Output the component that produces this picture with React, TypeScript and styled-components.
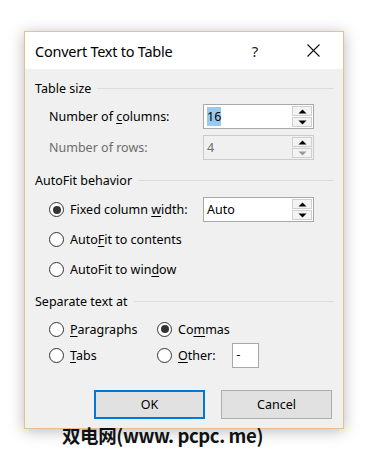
import React from "react";
import styled, { createGlobalStyle } from "styled-components";

const Global = createGlobalStyle`
  html, body { margin: 0; padding: 0; background: #ffffff; }
  body { font-family: "Noto Sans", "Open Sans", sans-serif; }
`;

const Page = styled.div`
  position: relative;
  width: 370px;
  height: 457px;
  padding: 31px 0 0 24px;
  box-sizing: border-box;
`;

const Dialog = styled.div`
  width: 320px;
  height: 398px;
  box-sizing: border-box;
  border: 1px solid #e2c290;
  background: #f0f0f0;
  box-shadow: 0 2px 14px rgba(0, 0, 0, 0.28);
  display: flex;
  flex-direction: column;
`;

const TitleBar = styled.div`
  height: 37px;
  background: #ffffff;
  display: flex;
  align-items: center;
  padding-left: 10px;
  flex-shrink: 0;
`;

const TitleText = styled.div`
  flex: 1;
  font-size: 14.5px;
  color: #000;
  letter-spacing: -0.25px;
`;

const Help = styled.div`
  width: 20px;
  font-size: 15px;
  color: #222;
  text-align: center;
  margin-right: 35px;
`;

const Close = styled.div`
  width: 26px;
  height: 37px;
  display: flex;
  align-items: center;
  justify-content: center;
  margin-right: 17px;
`;

const Body = styled.div`
  flex: 1;
  padding: 0 9px 0 10px;
  display: flex;
  flex-direction: column;
`;

const Heading = styled.div<{ $mt: number }>`
  margin-top: ${(p) => p.$mt}px;
  height: 16px;
  display: flex;
  align-items: center;
  gap: 6px;
  font-size: 12.5px;
  color: #000;
  &::after {
    content: "";
    flex: 1;
    height: 1px;
    background: #dcdcdc;
  }
`;

const Row = styled.div<{ $mt: number; $h: number }>`
  margin-top: ${(p) => p.$mt}px;
  height: ${(p) => p.$h}px;
  display: flex;
  align-items: center;
  padding-left: 14px;
`;

const Label = styled.div<{ $w?: number; $disabled?: boolean }>`
  width: ${(p) => (p.$w ? `${p.$w}px` : "auto")};
  font-size: 12.5px;
  color: ${(p) => (p.$disabled ? "#6d6d6d" : "#000")};
  flex-shrink: 0;
  white-space: nowrap;
`;

const U = styled.span`
  text-decoration: underline;
  text-underline-offset: 2px;
`;

const SpinBox = styled.div<{ $disabled?: boolean }>`
  width: 111px;
  height: 25px;
  box-sizing: border-box;
  border: 1px solid ${(p) => (p.$disabled ? "#cccccc" : "#a8a8a8")};
  background: ${(p) => (p.$disabled ? "#f0f0f0" : "#ffffff")};
  display: flex;
  align-items: center;
  padding: 1px;
`;

const SpinValue = styled.div<{ $disabled?: boolean }>`
  flex: 1;
  padding-left: 2px;
  font-size: 12.5px;
  color: ${(p) => (p.$disabled ? "#6d6d6d" : "#000")};
`;

const Selected = styled.span`
  background: #99c9ef;
  padding: 1px 0;
`;

const SpinButtons = styled.div`
  width: 20px;
  height: 21px;
  display: flex;
  flex-direction: column;
  gap: 1px;
`;

const SpinBtn = styled.div`
  flex: 1;
  box-sizing: border-box;
  border: 1px solid #cfcfcf;
  background: #f3f3f3;
  display: flex;
  align-items: center;
  justify-content: center;
`;

const Radio = styled.div<{ $checked?: boolean }>`
  width: 15px;
  height: 15px;
  box-sizing: border-box;
  border-radius: 50%;
  border: 1px solid #333333;
  background: #ffffff;
  display: flex;
  align-items: center;
  justify-content: center;
  margin-right: 6px;
  flex-shrink: 0;
  &::after {
    content: "";
    display: ${(p) => (p.$checked ? "block" : "none")};
    width: 8px;
    height: 8px;
    border-radius: 50%;
    background: #333333;
  }
`;

const Cell = styled.div<{ $w: number }>`
  width: ${(p) => p.$w}px;
  display: flex;
  align-items: center;
  flex-shrink: 0;
`;

const SmallInput = styled.div`
  width: 27px;
  height: 25px;
  box-sizing: border-box;
  border: 1px solid #a8a8a8;
  background: #ffffff;
  font-size: 12px;
  padding: 2px 0 0 4px;
  margin-left: 16px;
`;

const ButtonRow = styled.div`
  margin-top: 22px;
  display: flex;
  gap: 16px;
  padding-left: 59px;
`;

const Button = styled.div<{ $default?: boolean }>`
  width: 111px;
  height: 29px;
  box-sizing: border-box;
  border: ${(p) => (p.$default ? "2px solid #0078d7" : "1px solid #adadad")};
  background: #e1e1e1;
  display: flex;
  align-items: center;
  justify-content: center;
  font-size: 12.5px;
  color: #000;
`;

const Watermark = styled.div`
  position: absolute;
  left: 62px;
  top: 422px;
  font-family: "Noto Sans CJK SC", "Noto Sans", sans-serif;
  font-size: 18.5px;
  font-weight: 600;
  color: #111;
  letter-spacing: -0.4px;
  white-space: nowrap;
`;

const Up = () => (
  <svg width="9" height="5" viewBox="0 0 9 5">
    <path d="M0.5 4.5 L4.5 0.5 L8.5 4.5 Z" fill="#000" />
  </svg>
);
const Down = ({ c = "#000" }: { c?: string }) => (
  <svg width="9" height="5" viewBox="0 0 9 5">
    <path d="M0.5 0.5 L4.5 4.5 L8.5 0.5 Z" fill={c} />
  </svg>
);

const Spin = ({ value, disabled, selected }: { value: string; disabled?: boolean; selected?: boolean }) => (
  <SpinBox $disabled={disabled}>
    <SpinValue $disabled={disabled}>{selected ? <Selected>{value}</Selected> : value}</SpinValue>
    <SpinButtons>
      <SpinBtn>
        <Up />
      </SpinBtn>
      <SpinBtn>
        <Down c={disabled ? "#9a9a9a" : "#000"} />
      </SpinBtn>
    </SpinButtons>
  </SpinBox>
);

export default function App() {
  return (
    <Page>
      <Global />
      <Dialog>
        <TitleBar>
          <TitleText>Convert Text to Table</TitleText>
          <Help>?</Help>
          <Close>
            <svg width="13" height="13" viewBox="0 0 13 13">
              <path d="M0.5 0.5 L12.5 12.5 M12.5 0.5 L0.5 12.5" stroke="#111" strokeWidth="1.1" />
            </svg>
          </Close>
        </TitleBar>
        <Body>
          <Heading $mt={11}>Table size</Heading>
          <Row $mt={8} $h={25}>
            <Label $w={154}>
              Number of <U>c</U>olumns:
            </Label>
            <Spin value="16" selected />
          </Row>
          <Row $mt={6} $h={25}>
            <Label $w={154} $disabled>
              Number of rows:
            </Label>
            <Spin value="4" disabled />
          </Row>
          <Heading $mt={12}>AutoFit behavior</Heading>
          <Row $mt={9} $h={25}>
            <Cell $w={154}>
              <Radio $checked />
              <Label>
                Fixed column <U>w</U>idth:
              </Label>
            </Cell>
            <Spin value="Auto" />
          </Row>
          <Row $mt={7} $h={20}>
            <Radio />
            <Label>
              Auto<U>F</U>it to contents
            </Label>
          </Row>
          <Row $mt={10} $h={20}>
            <Radio />
            <Label>
              AutoFit to win<U>d</U>ow
            </Label>
          </Row>
          <Heading $mt={14}>Separate text at</Heading>
          <Row $mt={10} $h={20}>
            <Cell $w={108}>
              <Radio />
              <Label>
                <U>P</U>aragraphs
              </Label>
            </Cell>
            <Cell $w={120}>
              <Radio $checked />
              <Label>
                Co<U>m</U>mas
              </Label>
            </Cell>
          </Row>
          <Row $mt={4} $h={25}>
            <Cell $w={108}>
              <Radio />
              <Label>
                <U>T</U>abs
              </Label>
            </Cell>
            <Cell $w={120}>
              <Radio />
              <Label>
                <U>O</U>ther:
              </Label>
              <SmallInput>-</SmallInput>
            </Cell>
          </Row>
          <ButtonRow>
            <Button $default>OK</Button>
            <Button>Cancel</Button>
          </ButtonRow>
        </Body>
      </Dialog>
      <Watermark>双电网(www. pcpc. me)</Watermark>
    </Page>
  );
}
